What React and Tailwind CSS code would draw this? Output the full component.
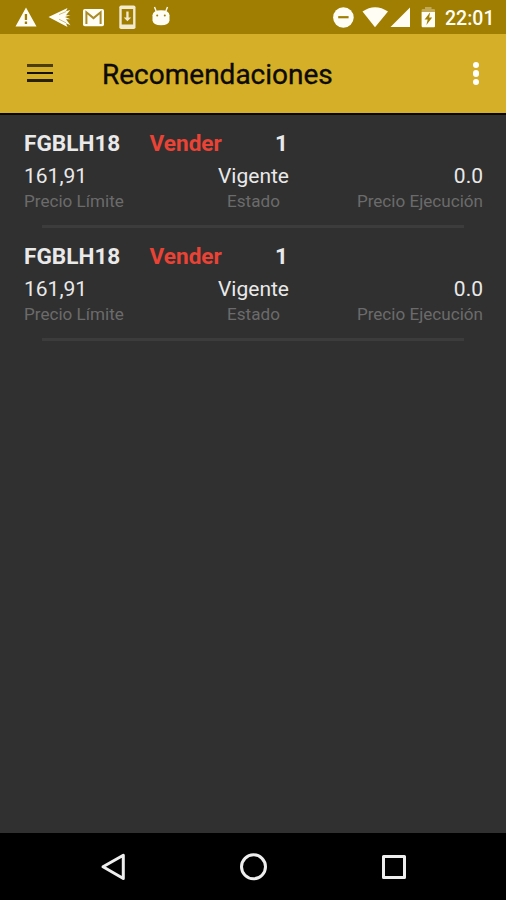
const orders = [
  { id: 1, symbol: 'FGBLH18', side: 'Vender', quantity: '1', limit: '161,91', status: 'Vigente', executed: '0.0' },
  { id: 2, symbol: 'FGBLH18', side: 'Vender', quantity: '1', limit: '161,91', status: 'Vigente', executed: '0.0' },
];

function StatusBar() {
  return (
    <div className="flex h-[34px] shrink-0 items-center justify-between bg-[#9f7e02] pl-[15px] pr-[11px] text-[#fffdf4]">
      <div className="flex items-center">
        <svg width="22" height="34" fill="currentColor">
          <path fillRule="evenodd" d="M11 7.5 21.5 26.5H.5ZM9.8 14v6h2.3v-6Zm0 7.5V24h2.3v-2.5Z" />
        </svg>
        <svg className="ml-[11px]" width="23" height="34" fill="currentColor">
          <path d="M.5 16.9 19.5 8 18 11.3 22.2 10 18 15.2H22.5L17 17.1 22.5 19.2 18 19.2 22.5 25.2 18 23.2 19.5 27Z" />
          <path d="m11 14.6 7-3M11 19.2l7 3.6" stroke="#9f7e02" strokeWidth=".5" />
        </svg>
        <svg className="ml-3" width="21" height="34">
          <rect y="9" width="21" height="17.3" rx="1.8" fill="currentColor" />
          <path d="M3.4 24V12.3l7.1 5.8 7.1-5.8V24" fill="none" stroke="#a98b27" strokeWidth="2" />
        </svg>
        <svg className="ml-[15px]" width="17" height="34">
          <rect x=".3" y="5.5" width="16.2" height="23.5" rx="1.8" fill="#f3ebcf" />
          <path d="M2.7 9h11.4v15.5H2.7Z" fill="#9f7e02" />
          <path d="M7.3 11.5h2.3v6h2.6l-3.8 3.8-3.7-3.8h2.6Z" fill="#f3ebcf" />
        </svg>
        <svg className="ml-4" width="18" height="34">
          <path d="m2.5 7 2 5M15.5 7l-2 5" stroke="currentColor" strokeWidth="1.4" />
          <path d="M.5 15.3Q1 10.4 9 10.3q8 .1 8.5 5v5.2q-.5 4.5-8.5 4.8-8-.3-8.5-4.8Z" fill="currentColor" />
          <circle cx="5.2" cy="15.5" r="1" fill="#9f7e02" />
          <circle cx="12.8" cy="15.5" r="1" fill="#9f7e02" />
        </svg>
      </div>
      <div className="flex items-center">
        <svg width="22" height="34">
          <circle cx="11.4" cy="17.5" r="10.3" fill="currentColor" />
          <path d="M6.2 17.2h10.4" stroke="#9f7e02" strokeWidth="2.2" />
        </svg>
        <svg className="ml-2" width="26" height="34" fill="currentColor">
          <path d="M.5 11.6Q13 2.8 26 11.6L13 27.2Z" />
        </svg>
        <svg className="ml-0.5" width="20" height="34" fill="currentColor">
          <path d="M20 7.5V27H.5Z" />
        </svg>
        <svg className="ml-[11px]" width="15" height="34">
          <path d="M.6 12V10q0-1 1-1H4V7h6.5v2H13q1 0 1 1v2Z" fill="#c1a958" />
          <path d="M.6 12H14v14q0 1.2-1 1.2H1.6q-1 0-1-1.2Z" fill="currentColor" />
          <path d="M9.2 12.3 3.6 19.4h3.1l-1.3 5.5 5.8-7.4H8.1Z" fill="#9f7e02" />
        </svg>
        <span className="ml-[9px] w-[50px] whitespace-nowrap pt-[3px] text-[19.5px] font-medium leading-none">22:01</span>
      </div>
    </div>
  );
}

function AppBar() {
  return (
    <header className="flex h-[81px] shrink-0 items-center border-b-2 border-[#080705] bg-[#d4af27] pl-[27px] pr-[27px]">
      <button className="mb-[2px] flex h-[18px] w-[26px] flex-col justify-between" aria-label="Menú">
        <span className="block h-[3px] w-full bg-[#4c3d0b]" />
        <span className="block h-[2px] w-full bg-[#151104]" />
        <span className="block h-[3px] w-full bg-[#292106]" />
      </button>
      <h1 className="ml-[49px] flex-1 whitespace-nowrap pt-[3px] text-[28px] font-normal leading-none text-[#0c0a02] [-webkit-text-stroke:0.35px_#0c0a02]">Recomendaciones</h1>
      <button className="flex flex-col gap-[2px]" aria-label="Más opciones">
        <span className="block size-[6.5px] rounded-full bg-white" />
        <span className="block size-[6.5px] rounded-full bg-white" />
        <span className="block size-[6.5px] rounded-full bg-white" />
      </button>
    </header>
  );
}

function Order({ order }) {
  return (
    <li className="h-[113px] pl-6 pr-[23px] pt-[13px]">
      <div className="flex h-8 items-center text-[22.6px] font-bold text-[#e9e9e9]">
        <span className="w-[125.5px]">{order.symbol}</span>
        <span className="w-[125.5px] text-[#ea4335]">{order.side}</span>
        <span>{order.quantity}</span>
      </div>
      <div className="-mt-px grid h-[31px] grid-cols-3 items-center pt-[2px] text-[21px] text-[#e9e9e9]">
        <span>{order.limit}</span>
        <span className="text-center">{order.status}</span>
        <span className="text-right">{order.executed}</span>
      </div>
      <div className="mt-px grid h-[21px] grid-cols-3 items-center whitespace-nowrap text-[17.1px] leading-[19px] text-[#6b6b6b]">
        <span>Precio Límite</span>
        <span className="text-center">Estado</span>
        <span className="text-right">Precio Ejecución</span>
      </div>
      <div className="ml-[18px] mr-[19px] mt-[13px] h-[3px] bg-[#3c3c3c]" />
    </li>
  );
}

function NavigationBar() {
  return (
    <nav className="flex h-[67px] shrink-0 items-center justify-between bg-black pl-[100px] pr-[98px] text-[#eeeeee]">
      <svg width="28" height="30" fill="none" stroke="currentColor" strokeWidth="3" strokeLinejoin="round">
        <path d="M23.3 3.2v23.3L3 14.8Z" />
      </svg>
      <svg width="28" height="30" fill="none" stroke="currentColor" strokeWidth="3">
        <circle cx="13.5" cy="14.8" r="12" />
      </svg>
      <svg width="28" height="30" fill="none" stroke="currentColor" strokeWidth="3" strokeLinejoin="round">
        <path d="M3.5 4.5h21v21h-21Z" />
      </svg>
    </nav>
  );
}

export default function App() {
  return (
    <div className="flex h-[900px] w-[506px] flex-col overflow-hidden bg-[#303030] font-[Roboto,sans-serif]">
      <StatusBar />
      <AppBar />
      <ul className="flex-1">
        {orders.map((order) => (
          <Order key={order.id} order={order} />
        ))}
      </ul>
      <NavigationBar />
    </div>
  );
}
